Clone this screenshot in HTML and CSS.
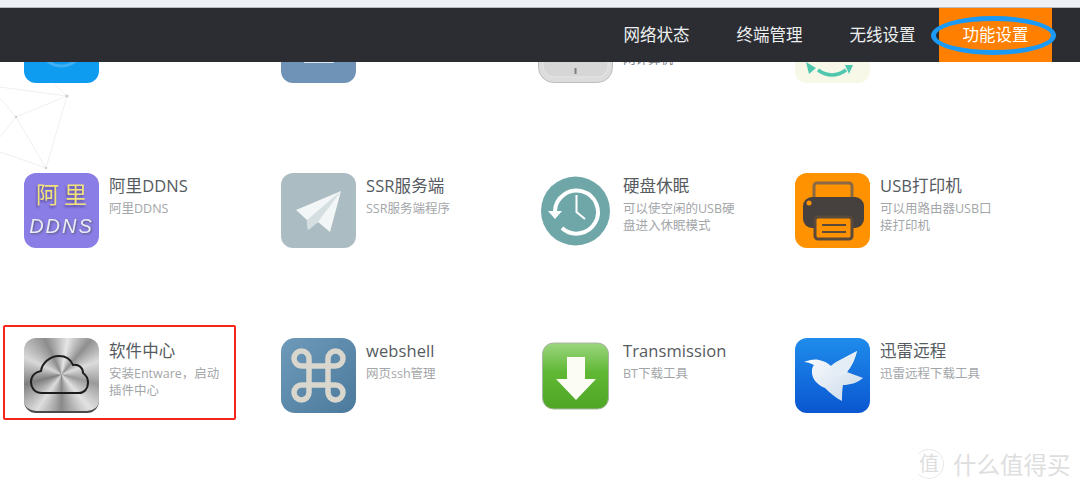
FILE: index.html
```html
<!DOCTYPE html>
<html lang="zh-CN">
<head>
    <meta charset="UTF-8">
    <meta name="viewport" content="width=device-width, initial-scale=1.0">
    <title>功能设置</title>
    <link rel="stylesheet" href="styles.css">
</head>
<body>

    <div class="top-strip"></div>

    <div class="page">
        <svg class="mesh" width="80" height="120" viewBox="0 0 80 120">
            <g stroke="#e8e8e8" stroke-width="0.7" fill="none">
                <path d="M0 32 L67 41 L46 113 L16 62 L67 41"/>
                <path d="M53 28 L67 41"/>
                <path d="M16 62 L0 82"/>
                <path d="M0 97 L46 113"/>
                <path d="M0 43 L16 62"/>
            </g>
            <g fill="#cfcfcf">
                <circle cx="67" cy="41" r="1.6"/>
                <circle cx="16" cy="62" r="1.2"/>
                <circle cx="46" cy="113" r="1.2"/>
            </g>
        </svg>

        <div class="grid">
            <div class="app">
                <svg class="icon" viewBox="0 0 75 75">
                    <rect width="75" height="75" rx="12" fill="#0e9cf0"/>
                    <circle cx="37.500" cy="36" r="22" fill="none" stroke="#3fb0f4" stroke-width="3"/>
                </svg>
            </div>
            <div class="app">
                <svg class="icon" viewBox="0 0 75 75">
                    <rect width="75" height="75" rx="12" fill="#6f93b6"/>
                    <rect x="23" y="40" width="30" height="15" fill="#dfe8f0"/>
                </svg>
            </div>
            <div class="app">
                <svg class="icon" viewBox="0 0 75 75">
                    <rect x="0.500" y="0.500" width="74" height="74" rx="15" fill="#dcdcdc" stroke="#bdbdbd"/>
                    <rect x="5" y="3" width="65" height="66" rx="11" fill="#d6d6d6" stroke="#e6e6e6"/>
                    <rect x="36.500" y="60" width="2" height="6" fill="#7d8288"/>
                </svg>
                <div class="text peek">
                    <div class="desc">网计算机</div>
                </div>
            </div>
            <div class="app">
                <svg class="icon" viewBox="0 0 75 75">
                    <rect width="75" height="75" rx="12" fill="#f8f8e8"/>
                    <path d="M23 62 Q37 72 51 62" fill="none" stroke="#4fc7ae" stroke-width="3.500"/>
                    <path d="M11 54 L21 60 L14 66 Z" fill="#4fc7ae"/>
                    <path d="M50 57 L58 57 L54 66 Z" fill="#4fc7ae"/>
                </svg>
            </div>

            <div class="app">
                <svg class="icon" viewBox="0 0 75 75">
                    <rect width="75" height="75" rx="12" fill="#8a7de6"/>
                    <text class="ali" x="37.500" y="30" text-anchor="middle">阿 里</text>
                    <text class="ddns" x="37.500" y="60" text-anchor="middle">DDNS</text>
                </svg>
                <div class="text">
                    <div class="name">阿里DDNS</div>
                    <div class="desc">阿里DDNS</div>
                </div>
            </div>
            <div class="app">
                <svg class="icon" viewBox="0 0 75 75">
                    <rect width="75" height="75" rx="12" fill="#acbcc3"/>
                    <path d="M15 37 L60 18 L49 59 L37 49 L27 57 L26 47 Z" fill="#f3f6f6"/>
                    <path d="M26 47 L60 18 L37 49 L27 57 Z" fill="#d5dfe1"/>
                </svg>
                <div class="text">
                    <div class="name">SSR服务端</div>
                    <div class="desc">SSR服务端程序</div>
                </div>
            </div>
            <div class="app">
                <svg class="icon" viewBox="0 0 75 75">
                    <circle cx="37.500" cy="38" r="34.500" fill="#6fa7a8"/>
                    <path d="M17 38 A21.500 21.500 0 1 1 24 55" fill="none" stroke="#fff" stroke-width="4"/>
                    <path d="M10 38 L24 38 L17 46 Z" fill="#fff"/>
                    <path d="M38.500 22 L38.500 39 L47 46" fill="none" stroke="#fff" stroke-width="2"/>
                </svg>
                <div class="text">
                    <div class="name">硬盘休眠</div>
                    <div class="desc">可以使空闲的USB硬<br>盘进入休眠模式</div>
                </div>
            </div>
            <div class="app">
                <svg class="icon" viewBox="0 0 75 75">
                    <rect width="75" height="75" rx="12" fill="#ff9200"/>
                    <rect x="19" y="10" width="38" height="25" rx="3" fill="#ff9200" stroke="#8a6a44" stroke-width="3"/>
                    <rect x="8" y="24" width="61" height="31" rx="9" fill="#46403f"/>
                    <circle cx="14" cy="30" r="2.500" fill="#ff9200"/>
                    <rect x="20" y="44" width="37" height="22" rx="3" fill="#ff9200" stroke="#5a4a3c" stroke-width="3"/>
                    <path d="M27 52 H51 M27 59 H51" stroke="#5a4a3c" stroke-width="2"/>
                </svg>
                <div class="text">
                    <div class="name">USB打印机</div>
                    <div class="desc">可以用路由器USB口<br>接打印机</div>
                </div>
            </div>

            <div class="app">
                <div class="icon metal">
                    <svg viewBox="0 0 75 75">
                        <path d="M18 55 C10 55 7 49 7 44 C7 38 11 34 17 33 C18 25 26 18 35 18 C42 18 47 22 49 27 C55 26 59 30 59 35 C62 37 64 41 64 45 C64 51 60 55 55 55 Z" fill="none" stroke="#1c1c1c" stroke-width="2"/>
                    </svg>
                </div>
                <div class="text">
                    <div class="name">软件中心</div>
                    <div class="desc">安装Entware，启动<br>插件中心</div>
                </div>
            </div>
            <div class="app">
                <svg class="icon" viewBox="0 0 75 75">
                    <defs>
                        <linearGradient id="slate" x1="0" y1="0" x2="1" y2="1">
                            <stop offset="0" stop-color="#6f9aba"/>
                            <stop offset="1" stop-color="#4b7a9c"/>
                        </linearGradient>
                    </defs>
                    <rect width="75" height="75" rx="14" fill="url(#slate)"/>
                    <path d="M28 28 H47 V47 H28 Z M28 28 H20.500 A7.500 7.500 0 1 1 28 20.500 Z M47 28 V20.500 A7.500 7.500 0 1 1 54.500 28 Z M47 47 H54.500 A7.500 7.500 0 1 1 47 54.500 Z M28 47 V54.500 A7.500 7.500 0 1 1 20.500 47 Z" fill="none" stroke="#d8d6cd" stroke-width="5.500"/>
                </svg>
                <div class="text">
                    <div class="name">webshell</div>
                    <div class="desc">网页ssh管理</div>
                </div>
            </div>
            <div class="app">
                <svg class="icon" viewBox="0 0 75 75">
                    <defs>
                        <linearGradient id="green" x1="0" y1="0" x2="0" y2="1">
                            <stop offset="0" stop-color="#9bd67f"/>
                            <stop offset="0.45" stop-color="#5fb733"/>
                            <stop offset="1" stop-color="#4ea625"/>
                        </linearGradient>
                    </defs>
                    <rect x="4.500" y="5" width="66" height="66" rx="11" fill="url(#green)" stroke="#a9b5a2"/>
                    <path d="M29 19 H47 V41 H58 L38 62 L18 41 H29 Z" fill="#fbfdf5"/>
                </svg>
                <div class="text">
                    <div class="name">Transmission</div>
                    <div class="desc">BT下载工具</div>
                </div>
            </div>
            <div class="app">
                <svg class="icon" viewBox="0 0 75 75">
                    <defs>
                        <linearGradient id="blue" x1="0" y1="0" x2="0" y2="1">
                            <stop offset="0" stop-color="#1f8cec"/>
                            <stop offset="1" stop-color="#0a56d0"/>
                        </linearGradient>
                        <linearGradient id="feather" x1="0" y1="0" x2="1" y2="1">
                            <stop offset="0" stop-color="#ffffff"/>
                            <stop offset="1" stop-color="#c9d8ea"/>
                        </linearGradient>
                    </defs>
                    <rect width="75" height="75" rx="12" fill="url(#blue)"/>
                    <path d="M9 24 C14 22 19 21 24 22 C29 23 33 25 36 28 C43 22 54 18 62 13 C60 21 57 28 52 34 C57 36 63 38 68 40 C62 45 55 47 48 47 C47 53 47 58 47 63 C41 60 35 55 30 50 C22 47 16 40 17 32 C17 30 18 28 19 27 C15 25 12 24 9 24 Z" fill="url(#feather)"/>
                    <path d="M36 28 C43 22 54 18 62 13 C60 21 57 28 52 34 C48 38 42 39 38 37 C37 34 36 31 36 28 Z" fill="#e4ecf5"/>
                </svg>
                <div class="text">
                    <div class="name">迅雷远程</div>
                    <div class="desc">迅雷远程下载工具</div>
                </div>
            </div>
        </div>

        <div class="highlight"></div>
    </div>

    <div class="navbar">
        <a class="nav-item">网络状态</a>
        <a class="nav-item">终端管理</a>
        <a class="nav-item">无线设置</a>
        <a class="nav-item active">功能设置</a>
    </div>
    <div class="nav-ring"></div>

    <div class="watermark">
        <span class="wm-badge">值</span>
        <span class="wm-text">什么值得买</span>
    </div>

</body>
</html>
```

FILE: styles.css
```css
body {
    margin: 0;
    padding: 0;
    height: 488px;
    overflow: hidden;
    position: relative;
    background-color: #fff;
    font-family: "Open Sans", "Noto Sans CJK SC", sans-serif;
}

.top-strip {
    height: 7px;
    background-color: #eef1f6;
    border-bottom: 1px solid #b9bbbe;
}

.page {
    padding-left: 24px;
}

.mesh {
    position: absolute;
    top: 55px;
    left: 0;
}

.grid {
    display: grid;
    grid-template-columns: repeat(4, 257px);
    grid-auto-rows: 165px;
    position: relative;
}

.app {
    display: flex;
    gap: 10px;
}

.icon {
    width: 75px;
    height: 75px;
    flex: none;
}

.metal {
    border-radius: 12px;
    box-sizing: border-box;
    border-bottom: 2px solid #4a4a4a;
    background: conic-gradient(from 10deg, #e6e6e6, #8f8f8f 30deg, #dcdcdc 60deg, #9a9a9a 95deg, #e2e2e2 130deg, #8a8a8a 170deg, #dedede 205deg, #7e7e7e 245deg, #d8d8d8 285deg, #8c8c8c 325deg, #e6e6e6);
}

.metal svg {
    display: block;
    width: 75px;
    height: 75px;
}

.text {
    padding-top: 2px;
}

.peek {
    padding-top: 43px;
}

.name {
    font-size: 16.500px;
    line-height: 22px;
    color: #555b60;
    letter-spacing: 0.1px;
}

.desc {
    font-size: 12.500px;
    line-height: 17px;
    color: #a3a6a9;
    margin-top: 3px;
}

.peek .desc {
    margin-top: 0;
    color: #7d8288;
}

.ali {
    font-size: 23px;
    fill: #f2e27a;
    font-family: "Noto Sans CJK SC", sans-serif;
    filter: drop-shadow(-1px 2px 1px #5b4fa0);
}

.ddns {
    font-size: 20px;
    font-style: italic;
    fill: #ececf5;
    letter-spacing: 2px;
    font-family: "Liberation Sans", sans-serif;
    filter: drop-shadow(1px 1px 1px #5a5a78);
}

.highlight {
    position: absolute;
    left: 3px;
    top: 325px;
    width: 229px;
    height: 91px;
    border: 2px solid #f5241c;
    border-radius: 2px;
}

.navbar {
    position: absolute;
    top: 8px;
    left: 0;
    right: 0;
    height: 54px;
    background-color: #2b2d33;
    display: flex;
    justify-content: flex-end;
    padding-right: 28px;
}

.nav-item {
    width: 113px;
    text-align: center;
    line-height: 54px;
    font-size: 16.500px;
    color: #eef0f0;
}

.nav-item.active {
    background-color: #ff8000;
    color: #fff;
}

.nav-ring {
    position: absolute;
    left: 931px;
    top: 16px;
    width: 115px;
    height: 29px;
    border: 5px solid #1b9af5;
    border-radius: 50%;
}

.watermark {
    position: absolute;
    left: 914px;
    top: 447px;
    display: flex;
    align-items: center;
    gap: 9px;
    color: #dedede;
}

.wm-badge {
    width: 28px;
    height: 28px;
    border: 1px solid #e8e8e8;
    border-left-color: transparent;
    border-radius: 50%;
    font-size: 20px;
    line-height: 28px;
    text-align: center;
}

.wm-text {
    font-size: 23.500px;
}
```
